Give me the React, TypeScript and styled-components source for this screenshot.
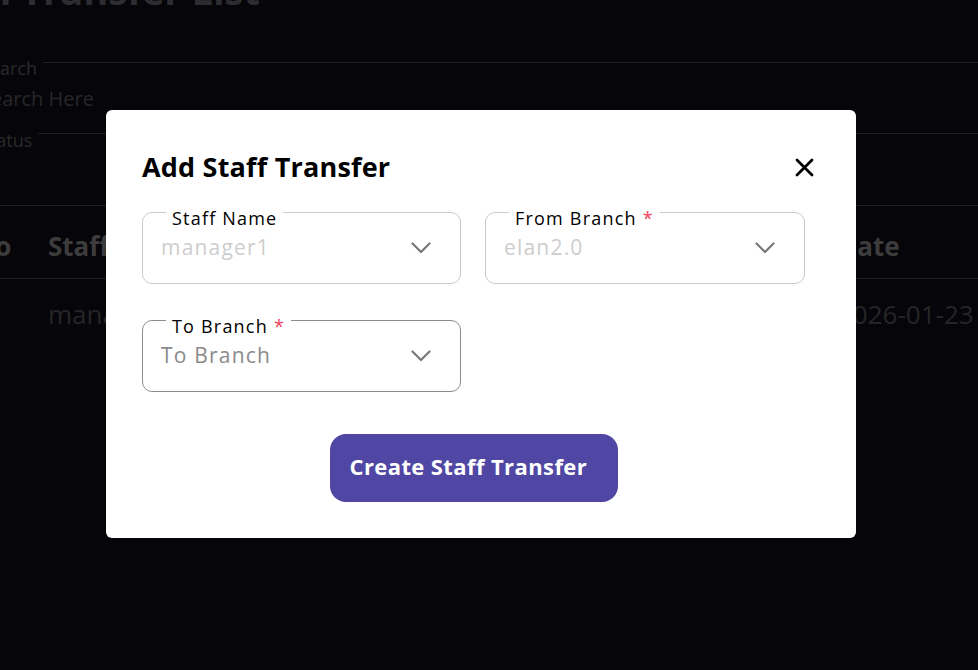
import React from "react";
import styled, { createGlobalStyle } from "styled-components";

const GlobalStyle = createGlobalStyle`
  html, body {
    margin: 0;
    padding: 0;
    background: #0c0a14;
    overflow: hidden;
  }
  body {
    font-family: "Open Sans", "Noto Sans", sans-serif;
  }
  * { box-sizing: border-box; }
`;

/* ---------- background page ---------- */

const Page = styled.div`
  width: 978px;
  height: 670px;
  overflow: hidden;
  display: flex;
  flex-direction: column;
`;

const PageTitle = styled.h1`
  margin: -32px 0 0 -124px;
  height: 44px;
  font-size: 38px;
  line-height: 44px;
  font-weight: 700;
  color: #5a5a62;
  white-space: nowrap;
`;

const Filters = styled.div`
  margin: 44px 0 0 -20px;
  display: flex;
  flex-direction: column;
`;

const FilterLabelRow = styled.div<{ $lineTop: number }>`
  display: flex;
  align-items: flex-start;
  height: 24px;
  font-size: 18px;
  line-height: 24px;
  color: #545454;
  &::after {
    content: "";
    flex: 1;
    margin-top: ${(p) => p.$lineTop}px;
    margin-left: 6px;
    border-top: 1px solid #3e3e44;
  }
`;

const FilterPlaceholder = styled.div`
  height: 38px;
  font-size: 20px;
  line-height: 38px;
  color: #4e4e4e;
`;

const StatusRow = styled(FilterLabelRow)`
  margin-top: 10px;
`;

const Table = styled.div`
  margin-top: 53px;
  margin-left: -26px;
  border-top: 1px solid #3e3e44;
  display: flex;
  flex-direction: column;
`;

const TableRow = styled.div<{ $head?: boolean }>`
  display: grid;
  grid-template-columns: 74px 1fr 140px;
  align-items: center;
  height: ${(p) => (p.$head ? 73 : 74)}px;
  padding: ${(p) => (p.$head ? "8px 0 0" : "0 0 4px")};
  border-bottom: ${(p) => (p.$head ? "1px solid #3e3e44" : "none")};
  font-size: 26px;
  font-weight: ${(p) => (p.$head ? 700 : 400)};
  color: ${(p) => (p.$head ? "#787878" : "#4a4a4a")};
  white-space: nowrap;
`;

const Cell = styled.div``;

/* ---------- modal ---------- */

const Backdrop = styled.div`
  position: fixed;
  inset: 0;
  background: rgba(0, 0, 0, 0.5);
  display: flex;
  align-items: center;
  justify-content: center;
  padding: 0 16px 22px 0;
`;

const Modal = styled.div`
  width: 750px;
  background: #ffffff;
  border-radius: 6px;
  padding: 39px 51px 36px 36px;
  display: flex;
  flex-direction: column;
`;

const Header = styled.div`
  display: flex;
  align-items: center;
  justify-content: space-between;
  height: 36px;
  margin-right: -9px;
`;

const Title = styled.h2`
  margin: 0;
  font-size: 27px;
  line-height: 36px;
  font-weight: 700;
  letter-spacing: 0.2px;
  color: #000;
`;

const CloseButton = styled.button`
  border: none;
  background: none;
  padding: 0;
  width: 19px;
  height: 19px;
  display: flex;
  cursor: pointer;
`;

const FormGrid = styled.div`
  margin-top: 27px;
  display: grid;
  grid-template-columns: 319px 320px;
  column-gap: 24px;
  row-gap: 36px;
`;

const Field = styled.div<{ $active?: boolean }>`
  position: relative;
  height: 72px;
  border: 1px solid ${(p) => (p.$active ? "#8c8c8c" : "#cacaca")};
  border-radius: 10px;
  display: flex;
  align-items: center;
  justify-content: space-between;
  padding: 0 29px 0 18px;
`;

const FieldLabel = styled.span`
  position: absolute;
  top: -6px;
  left: 23px;
  padding: 0 6px;
  background: #fff;
  font-size: 18px;
  line-height: 22px;
  letter-spacing: 1.2px;
  color: #000;
  white-space: nowrap;
`;

const Required = styled.span`
  color: #f2405a;
  margin-left: 6px;
`;

const FieldValue = styled.span<{ $placeholder?: boolean }>`
  font-size: 21px;
  letter-spacing: 1.2px;
  color: ${(p) => (p.$placeholder ? "#8a8a8a" : "#cdcdcd")};
  margin-top: -2px;
`;

const Chevron = () => (
  <svg width="20" height="12" viewBox="0 0 20 12" fill="none">
    <polyline
      points="1.5,1.5 10,10 18.5,1.5"
      stroke="#777"
      strokeWidth="2.2"
      strokeLinecap="round"
      strokeLinejoin="round"
    />
  </svg>
);

const CloseIcon = () => (
  <svg width="19" height="19" viewBox="0 0 19 19" fill="none">
    <path
      d="M2 2 L17 17 M17 2 L2 17"
      stroke="#000"
      strokeWidth="2.8"
      strokeLinecap="round"
    />
  </svg>
);

const SubmitButton = styled.button`
  margin-top: 42px;
  align-self: center;
  width: 288px;
  height: 68px;
  border: none;
  border-radius: 16px;
  background: #5046a3;
  color: #fff;
  font-family: inherit;
  font-size: 22px;
  font-weight: 700;
  letter-spacing: 0.4px;
  text-align: left;
  padding: 0 0 4px 20px;
  cursor: pointer;
`;

type FieldProps = {
  label: string;
  value: string;
  required?: boolean;
  placeholder?: boolean;
};

const SelectField = ({ label, value, required, placeholder }: FieldProps) => (
  <Field $active={placeholder}>
    <FieldLabel>
      {label}
      {required && <Required>*</Required>}
    </FieldLabel>
    <FieldValue $placeholder={placeholder}>{value}</FieldValue>
    <Chevron />
  </Field>
);

export default function App() {
  return (
    <>
      <GlobalStyle />
      <Page>
        <PageTitle>Branch Transfer List</PageTitle>
        <Filters>
          <FilterLabelRow $lineTop={6}>Search</FilterLabelRow>
          <FilterPlaceholder>Search Here</FilterPlaceholder>
          <StatusRow $lineTop={5}>Status</StatusRow>
        </Filters>
        <Table>
          <TableRow $head>
            <Cell>No</Cell>
            <Cell>Staff Name</Cell>
            <Cell>Date</Cell>
          </TableRow>
          <TableRow>
            <Cell>1</Cell>
            <Cell>manager1</Cell>
            <Cell>2026-01-23</Cell>
          </TableRow>
        </Table>
      </Page>
      <Backdrop>
        <Modal>
          <Header>
            <Title>Add Staff Transfer</Title>
            <CloseButton aria-label="Close">
              <CloseIcon />
            </CloseButton>
          </Header>
          <FormGrid>
            <SelectField label="Staff Name" value="manager1" />
            <SelectField label="From Branch" value="elan2.0" required />
            <SelectField label="To Branch" value="To Branch" required placeholder />
          </FormGrid>
          <SubmitButton>Create Staff Transfer</SubmitButton>
        </Modal>
      </Backdrop>
    </>
  );
}
